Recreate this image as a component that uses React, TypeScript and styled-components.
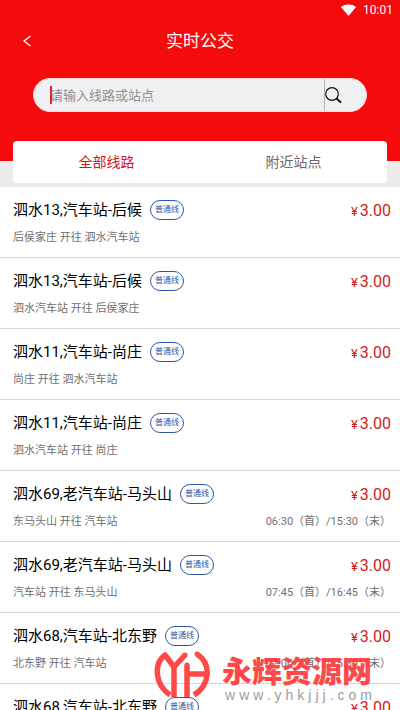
import React from "react";
import styled, { createGlobalStyle } from "styled-components";

const GlobalStyle = createGlobalStyle`
  * { box-sizing: border-box; }
  body { margin: 0; background: #fff; }
  body, button, input { font-family: Roboto, "Noto Sans CJK SC", sans-serif; }
`;

const Screen = styled.div`
  position: relative;
  display: flex;
  flex-direction: column;
  height: 100vh;
  overflow: hidden;
  background: #fff;
`;

const Header = styled.header`
  flex: none;
  background: linear-gradient(#f40b0b 161px, #ececec 161px);
  padding-bottom: 4px;
`;

const StatusBar = styled.div`
  display: flex;
  align-items: center;
  justify-content: flex-end;
  gap: 7px;
  height: 20px;
  padding: 0 7px;
  color: #fff;
  font-size: 12px;
`;

const NavBar = styled.div`
  display: grid;
  grid-template-columns: 54px 1fr 54px;
  align-items: center;
  height: 42px;
`;

const BackButton = styled.button`
  display: flex;
  justify-content: center;
  padding: 0;
  border: 0;
  background: none;
  color: #fff;
`;

const PageTitle = styled.h1`
  margin: 0;
  text-align: center;
  color: #fff;
  font-size: 17px;
  font-weight: 400;
  line-height: 24px;
`;

const SearchForm = styled.form`
  display: flex;
  height: 34px;
  margin: 16px 33px 29px;
  overflow: hidden;
  border: 1px solid #fbd5d8;
  border-radius: 17px;
  background: #f0f0f3;
`;

const SearchField = styled.div`
  display: flex;
  flex: 1;
  align-items: center;
  padding-left: 16px;
  border-right: 1px solid #b4b4b6;
`;

const Caret = styled.span`
  width: 2px;
  height: 18px;
  margin-right: -2px;
  background: #d8232c;
`;

const SearchInput = styled.input`
  flex: 1;
  min-width: 0;
  padding: 0;
  border: 0;
  outline: 0;
  background: none;
  font-size: 13px;
  &::placeholder { color: #8f8f91; opacity: 1; }
`;

const SearchButton = styled.button`
  display: flex;
  align-items: center;
  width: 41px;
  padding: 0;
  border: 0;
  background: none;
  color: #111;
`;

const Tabs = styled.div`
  display: flex;
  height: 42px;
  margin: 0 13px;
  border-radius: 4px;
  background: #fff;
`;

const Tab = styled.button<{ $active?: boolean }>`
  flex: 1;
  padding: 0 0 2px;
  border: 0;
  background: none;
  color: ${(p) => (p.$active ? "#d81414" : "#686868")};
  font-size: 14px;
`;

const RouteList = styled.ul`
  flex: 1;
  min-height: 0;
  margin: 0;
  padding: 0;
  overflow-y: auto;
  scrollbar-width: none;
  list-style: none;
`;

const RouteItem = styled.li`
  height: 71px;
  padding: 11px 9px 0 13px;
  border-bottom: 1px solid #d6d6d6;
`;

const RouteLine = styled.div`
  display: flex;
  align-items: center;
  height: 24px;
`;

const RouteName = styled.h2`
  margin: 0;
  color: #000;
  font-size: 15px;
  font-weight: 400;
  line-height: 22px;
  white-space: nowrap;
`;

const Badge = styled.span`
  width: 34px;
  height: 20px;
  margin-left: 8px;
  border: 1px solid #2f57a6;
  border-radius: 10px;
  color: #2f57a6;
  font-size: 8px;
  line-height: 18px;
  text-align: center;
`;

const Price = styled.span`
  display: flex;
  align-items: baseline;
  gap: 2px;
  margin-left: auto;
  color: #d41b1b;
  font-size: 16px;
`;

const Currency = styled.small`
  font-size: 13px;
`;

const Detail = styled.div`
  display: flex;
  justify-content: space-between;
  height: 16px;
  margin-top: 8px;
  color: #707070;
  font-size: 11px;
  line-height: 16px;
`;

const Watermark = styled.div`
  position: absolute;
  right: 28px;
  bottom: 6px;
  display: flex;
  align-items: flex-start;
  gap: 11px;
  opacity: 0.95;
  pointer-events: none;
`;

const WatermarkText = styled.div`
  display: flex;
  flex-direction: column;
  align-items: flex-end;
  padding-top: 2px;
`;

const WatermarkName = styled.strong`
  color: #ff4040;
  font-family: "Noto Sans CJK SC", sans-serif;
  font-size: 30px;
  font-weight: 900;
  line-height: 34px;
`;

const WatermarkSite = styled.span`
  margin-right: -4px;
  color: #989898;
  font-family: "Liberation Sans", sans-serif;
  font-size: 14px;
  letter-spacing: 4px;
  line-height: 18px;
`;

type Route = { name: string; trip: string; hours?: string };

const routes: Route[] = [
  { name: "泗水13,汽车站-后候", trip: "后侯家庄 开往 泗水汽车站" },
  { name: "泗水13,汽车站-后候", trip: "泗水汽车站 开往 后侯家庄" },
  { name: "泗水11,汽车站-尚庄", trip: "尚庄 开往 泗水汽车站" },
  { name: "泗水11,汽车站-尚庄", trip: "泗水汽车站 开往 尚庄" },
  { name: "泗水69,老汽车站-马头山", trip: "东马头山 开往 汽车站", hours: "06:30（首）/15:30（末）" },
  { name: "泗水69,老汽车站-马头山", trip: "汽车站 开往 东马头山", hours: "07:45（首）/16:45（末）" },
  { name: "泗水68,汽车站-北东野", trip: "北东野 开往 汽车站", hours: "07:00（首）/15:30（末）" },
  { name: "泗水68,汽车站-北东野", trip: "汽车站 开往 北东野" },
];

export default function App() {
  return (
    <Screen>
      <GlobalStyle />
      <Header>
        <StatusBar>
          <svg width="15" height="12" viewBox="0 0 15 12" aria-hidden="true">
            <path d="M0 3C4-.3 11-.3 15 3L7.500 12Z" fill="#fff" />
          </svg>
          <time>10:01</time>
        </StatusBar>
        <NavBar>
          <BackButton aria-label="返回">
            <svg width="10" height="12" viewBox="0 0 10 12" fill="none" stroke="currentColor" strokeWidth="1.300">
              <path d="M8.500 1 2 6l6.500 5" />
            </svg>
          </BackButton>
          <PageTitle>实时公交</PageTitle>
        </NavBar>
        <SearchForm onSubmit={(e) => e.preventDefault()}>
          <SearchField>
            <Caret />
            <SearchInput aria-label="搜索" placeholder="请输入线路或站点" />
          </SearchField>
          <SearchButton aria-label="查询">
            <svg width="17" height="17" viewBox="0 0 17 17" fill="none" stroke="currentColor">
              <circle cx="7" cy="7" r="6.300" strokeWidth="1.200" />
              <path d="m11.500 11.500 4.500 4" strokeWidth="2" />
            </svg>
          </SearchButton>
        </SearchForm>
        <Tabs role="tablist">
          <Tab role="tab" aria-selected="true" $active>全部线路</Tab>
          <Tab role="tab" aria-selected="false">附近站点</Tab>
        </Tabs>
      </Header>
      <RouteList>
        {routes.map((route, i) => (
          <RouteItem key={i}>
            <RouteLine>
              <RouteName>{route.name}</RouteName>
              <Badge>普通线</Badge>
              <Price><Currency>¥</Currency>3.00</Price>
            </RouteLine>
            <Detail>
              <span>{route.trip}</span>
              {route.hours && <span>{route.hours}</span>}
            </Detail>
          </RouteItem>
        ))}
      </RouteList>
      <Watermark>
        <svg width="58" height="47" viewBox="0 0 58 47" fill="none" stroke="#ff4040" strokeWidth="5.500" strokeLinejoin="round" aria-hidden="true">
          <path d="M17 45C1 34 1 13 12 5L21 17" />
          <path d="M32 5 21 17V47" />
          <path d="M34 15V47M34 24H53" />
          <path d="M44 4C59 14 57 35 41 45" />
          <circle cx="32" cy="5" r="2.500" fill="#ff4040" stroke="none" />
          <circle cx="34" cy="15" r="2.500" fill="#ff4040" stroke="none" />
          <circle cx="44" cy="4" r="2.500" fill="#ff4040" stroke="none" />
        </svg>
        <WatermarkText>
          <WatermarkName>永辉资源网</WatermarkName>
          <WatermarkSite>www.yhkjjj.com</WatermarkSite>
        </WatermarkText>
      </Watermark>
    </Screen>
  );
}
